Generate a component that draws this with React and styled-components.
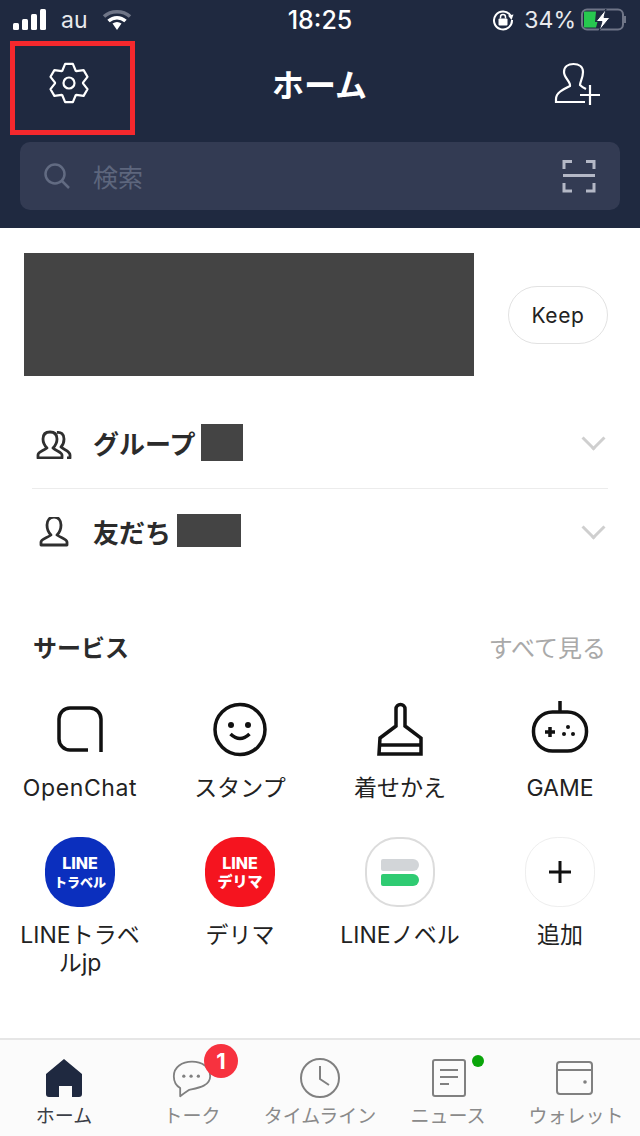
import React from 'react'
import styled, { createGlobalStyle } from 'styled-components'

const GlobalStyle = createGlobalStyle`
  html, body {
    margin: 0;
    padding: 0;
    background: #fff;
  }
  * {
    box-sizing: border-box;
  }
`

// six tooth gear outline around 0,0
const gearPath = () => {
  const pts = []
  for (let i = 0; i < 6; i++) {
    const a = ((-90 + i * 60) * Math.PI) / 180
    const steps = [
      [-0.5, 14],
      [-0.2, 19.5],
      [0.2, 19.5],
      [0.5, 14],
    ]
    steps.forEach(([d, r]) => {
      pts.push(`${(Math.cos(a + d) * r).toFixed(2)} ${(Math.sin(a + d) * r).toFixed(2)}`)
    })
  }
  return `M${pts.join('L')}Z`
}

export default function App() {
  return (
    <>
      <GlobalStyle />
      <Page>
        <Header>
          <StatusBar>
            <StatusLeft>
              <svg width="34" height="22" viewBox="0 0 34 22" fill="#fff">
                <rect x="0" y="14" width="6" height="7" rx="1.500" />
                <rect x="9" y="10" width="6" height="11" rx="1.500" />
                <rect x="18" y="5" width="6" height="16" rx="1.500" />
                <rect x="27" y="0" width="6" height="21" rx="1.500" />
              </svg>
              <Carrier>au</Carrier>
              <svg width="30" height="22" viewBox="0 0 30 22" fill="none" strokeWidth="3.500">
                <path d="M2 7.500C9 1 21 1 28 7.500" stroke="#6f7587" />
                <path d="M6.500 12C11.500 7.500 18.500 7.500 23.500 12" stroke="#fff" />
                <path d="M10.500 14.500L15 21L19.500 14.500Q15 11.500 10.500 14.500Z" fill="#fff" strokeWidth="0" />
              </svg>
            </StatusLeft>
            <Clock>18:25</Clock>
            <StatusRight>
              <svg width="22" height="22" viewBox="0 0 22 22" fill="none">
                <path d="M18.500 6.500A9 9 0 1 0 20 11" stroke="#fff" strokeWidth="2" />
                <path d="M16 6.500L21.500 5.500L19.500 11Z" fill="#fff" />
                <rect x="6.500" y="9.500" width="9" height="7" rx="1" fill="#fff" />
                <path d="M8.500 9.500V8a2.500 2.500 0 0 1 5 0V9.500" stroke="#fff" strokeWidth="1.500" />
              </svg>
              <Percent>34%</Percent>
              <svg width="46" height="24" viewBox="0 0 46 24" fill="none">
                <rect x="1" y="1.500" width="41" height="20" rx="5" stroke="#6f7587" strokeWidth="2" />
                <path d="M3 3.500H15L14 14H16.500L15 19.500H3Z" fill="#27c84f" />
                <path d="M44 8V15" stroke="#6f7587" strokeWidth="2" />
                <path d="M25 1L15 13.500H21L18 23L29 9.500H23Z" fill="#fff" stroke="#1f2940" strokeWidth="1" />
              </svg>
            </StatusRight>
          </StatusBar>

          <NavBar>
            <svg width="48" height="48" viewBox="-24 -24 48 48" fill="none" stroke="#fff" strokeWidth="2.200" strokeLinejoin="round">
              <path d={gearPath()} />
              <circle r="5.500" />
            </svg>
            <Title>ホーム</Title>
            <svg width="50" height="46" viewBox="552 60 50 46" fill="none" stroke="#fff" strokeWidth="2.200">
              <path d="M585 102H556V99C556 93 562 90 570 86C571 82 564 78 564 72C564 67 568 64 573.500 64C579 64 583 67 583 72C583 78 580 82 580 85Q582 87 586 89" />
              <path d="M590 85V105M580 95H600" />
            </svg>
          </NavBar>

          <SearchBar>
            <svg width="26" height="28" viewBox="0 0 26 28" fill="none" stroke="#626b82" strokeWidth="2.500">
              <circle cx="11" cy="12" r="9.500" />
              <path d="M18 19L25 26" />
            </svg>
            <SearchText>検索</SearchText>
            <svg width="34" height="34" viewBox="0 0 34 34" fill="none" stroke="#b4b8c6" strokeWidth="3">
              <path d="M2 10V2.500H10M24 2.500H32V10M2 24V32H10M24 32H32V24" />
              <path d="M1 16.500H33" />
            </svg>
          </SearchBar>

          <Highlight />
        </Header>

        <Content>
          <ProfileRow>
            <Redacted $w={450} $h={123} />
            <KeepButton>Keep</KeepButton>
          </ProfileRow>

          <Rows>
            <Row>
              <RowIcon>
                <svg width="36" height="30" viewBox="0 -1 36 30" fill="none" stroke="#2f2f2f" strokeWidth="2.800" strokeLinejoin="round">
                  <path d="M2 28V25C2 22 7 21 11 18C8 15 7 12 7 9C7 4 10 2 14 2C18 2 21 4 21 9C21 12 20 15 17 18C20 21 26 22 26 25V28Z" />
                  <path d="M21 2.500C25 2 28 4 28 9C28 12 27 15 25 17C28 20 34 21 34 25V28H31" />
                </svg>
              </RowIcon>
              <RowLabel>グループ</RowLabel>
              <Redacted $w={42} $h={37} $nudge={-4} />
              <Chevron />
            </Row>
            <Row>
              <RowIcon>
                <svg width="30" height="32" viewBox="0 2 30 32" fill="none" stroke="#2f2f2f" strokeWidth="2.800" strokeLinejoin="round">
                  <path d="M2 30V27C2 24 8 23 12 20C9 17 8 13 8 10C8 5 11 2 15 2C19 2 22 5 22 10C22 13 21 17 18 20C22 23 28 24 28 27V30Z" />
                </svg>
              </RowIcon>
              <RowLabel>友だち</RowLabel>
              <Redacted $w={64} $h={33} $nudge={-6} />
              <Chevron />
            </Row>
          </Rows>

          <ServiceHead>
            <ServiceTitle>サービス</ServiceTitle>
            <SeeAll>すべて見る</SeeAll>
          </ServiceHead>

          <ServiceGrid>
            {services.map((s) => (
              <ServiceItem key={s.label}>
                {s.icon}
                <ServiceLabel $tracking={s.tracking}>{s.label}</ServiceLabel>
              </ServiceItem>
            ))}
          </ServiceGrid>
        </Content>

        <TabBar>
          <Tab>
            <svg width="40" height="40" viewBox="0 0 40 40">
              <path d="M20 1L38 16V36a3 3 0 0 1-3 3H28V28H16V39H5a3 3 0 0 1-3-3V16Z" fill="#1f2940" />
              <path d="M15 28H24V39H15Z" fill="#fbfbfb" />
            </svg>
            <TabLabel $active>ホーム</TabLabel>
          </Tab>
          <Tab>
            <svg width="40" height="40" viewBox="0 0 44 42" fill="none" stroke="#808080" strokeWidth="2" strokeLinejoin="round">
              <path d="M22 3C33 3 42 9 42 19C42 30 28 32 19 34Q13 38 9 41Q9 35 9 32C4 29 2 24 2 19C2 9 11 3 22 3Z" />
              <circle cx="13" cy="19" r="1.800" fill="#808080" stroke="none" />
              <circle cx="21" cy="19" r="1.800" fill="#808080" stroke="none" />
              <circle cx="29" cy="19" r="1.800" fill="#808080" stroke="none" />
            </svg>
            <TabLabel>トーク</TabLabel>
            <Badge>1</Badge>
          </Tab>
          <Tab>
            <svg width="40" height="40" viewBox="0 0 40 40" fill="none" stroke="#808080" strokeWidth="2">
              <circle cx="20" cy="20" r="19" />
              <path d="M20 8V21L29 27" />
            </svg>
            <TabLabel>タイムライン</TabLabel>
          </Tab>
          <Tab>
            <svg width="40" height="40" viewBox="0 0 40 40" fill="none" stroke="#808080" strokeWidth="2">
              <rect x="5" y="2" width="32" height="36" rx="2" />
              <path d="M12 12H30M12 19H30M12 26H21" />
            </svg>
            <TabLabel>ニュース</TabLabel>
            <GreenDot />
          </Tab>
          <Tab>
            <svg width="40" height="40" viewBox="0 0 40 40" fill="none" stroke="#808080" strokeWidth="2">
              <rect x="1" y="4" width="35" height="32" rx="3" />
              <path d="M1 12H36" />
              <circle cx="29" cy="24" r="1.800" fill="#808080" stroke="none" />
            </svg>
            <TabLabel>ウォレット</TabLabel>
          </Tab>
        </TabBar>
      </Page>
    </>
  )
}

const Page = styled.div`
  display: flex;
  flex-direction: column;

  width: 640px;
  height: 1136px;
  overflow: hidden;

  font-family: Inter, 'Noto Sans CJK JP', sans-serif;
  color: #222;
`

const Header = styled.header`
  position: relative;

  display: flex;
  flex-direction: column;

  height: 228px;
  padding-bottom: 18px;

  background-color: #1f2940;
`

const StatusBar = styled.div`
  display: grid;
  grid-template-columns: 1fr auto 1fr;
  align-items: center;

  height: 40px;
  padding: 0 13px;

  color: #fff;
`

const StatusLeft = styled.div`
  display: flex;
  align-items: center;
  gap: 14px;
`

const StatusRight = styled.div`
  display: flex;
  align-items: center;
  justify-content: flex-end;
  gap: 5px;
`

const Carrier = styled.span`
  font-size: 23px;
  color: #e8e9ed;
`

const Clock = styled.span`
  font-size: 25px;
  font-weight: 500;
`

const Percent = styled.span`
  margin-left: 5px;

  font-size: 23px;
  color: #e8e9ed;
`

const NavBar = styled.div`
  display: flex;
  align-items: center;
  justify-content: space-between;

  height: 102px;
  padding: 0 38px 16px 45px;
`

const Title = styled.h1`
  margin: 0 0 0 -6px;

  font-size: 32px;
  font-weight: 700;
  color: #fff;
`

const SearchBar = styled.div`
  display: flex;
  align-items: center;
  gap: 23px;

  height: 68px;
  margin: 0 20px;
  padding: 0 24px;

  background-color: #333b53;
  border-radius: 10px;
`

const SearchText = styled.span`
  flex-grow: 1;

  font-size: 25px;
  color: #5d667d;
`

const Highlight = styled.div`
  position: absolute;
  top: 41px;
  left: 10px;

  width: 125px;
  height: 94px;

  border: 5px solid #f5282d;
`

const Content = styled.main`
  flex-grow: 1;

  padding-top: 25px;
`

const ProfileRow = styled.div`
  display: flex;
  align-items: center;
  justify-content: space-between;

  padding: 0 32px 0 24px;
`

const Redacted = styled.div`
  flex-shrink: 0;

  width: ${(p) => p.$w}px;
  height: ${(p) => p.$h}px;
  margin-top: ${(p) => p.$nudge || 0}px;

  background-color: #444;
`

const KeepButton = styled.button`
  width: 100px;
  height: 58px;
  padding-top: 2px;

  font-family: inherit;
  font-size: 21px;
  letter-spacing: 0.6px;
  color: #222;

  background-color: #fff;
  border: 1px solid #e2e2e2;
  border-radius: 29px;
`

const Rows = styled.div`
  margin: 24px 32px 0;
`

const Row = styled.div`
  display: flex;
  align-items: center;

  height: 88px;

  & + & {
    height: 89px;
    border-top: 1px solid #ececec;
  }
`

const RowIcon = styled.div`
  display: flex;
  justify-content: center;

  width: 44px;
  margin-right: 17px;
`

const RowLabel = styled.span`
  margin: -3px 6px 0 0;

  font-size: 26px;
  font-weight: 700;
  color: #2b2b2b;
`

const Chevron = styled.span`
  width: 17px;
  height: 17px;
  margin: -11px 6px 0 auto;

  border-right: 3px solid #cfcfcf;
  border-bottom: 3px solid #cfcfcf;
  transform: rotate(45deg);
`

const ServiceHead = styled.div`
  display: flex;
  align-items: center;
  justify-content: space-between;

  height: 40px;
  margin-top: 49px;
  padding: 0 34px 0 33px;
`

const ServiceTitle = styled.h2`
  margin: 0;

  font-size: 24px;
  font-weight: 700;
  color: #2b2b2b;
`

const SeeAll = styled.span`
  font-size: 24px;
  color: #a9a9a9;
`

const ServiceGrid = styled.div`
  display: grid;
  grid-template-columns: repeat(4, 160px);
  row-gap: 35px;

  margin-top: 32px;
`

const ServiceItem = styled.div`
  display: flex;
  flex-direction: column;
  align-items: center;
  gap: 14px;

  padding: 0 19px;
`

const ServiceLabel = styled.span`
  width: 100%;
  margin: 0 -10px;

  font-size: 23px;
  line-height: 28px;
  letter-spacing: ${(p) => p.$tracking || 0}px;
  text-align: center;
  word-break: break-all;
  color: #222;
`

const LineIcon = styled.svg`
  fill: none;
  stroke: #111;
  stroke-width: ${(p) => p.$weight};
`

const Logo = styled.div`
  display: flex;
  flex-direction: column;
  align-items: center;
  justify-content: center;
  gap: 3px;

  width: 70px;
  height: 70px;

  color: #fff;
  background-color: ${(p) => p.$bg};
  border: ${(p) => p.$border || 'none'};
  border-radius: 46%;
`

const LogoTop = styled.span`
  font-size: 16px;
  font-weight: 800;
  line-height: 16px;
`

const LogoSub = styled.span`
  font-size: ${(p) => p.$size}px;
  font-weight: 900;
  line-height: 16px;
  white-space: nowrap;
`

const NovelBar = styled.div`
  width: 38px;
  height: 12px;

  background-color: ${(p) => p.$color};
  border-radius: 2px 6px 6px 2px;
`

const TabBar = styled.nav`
  display: grid;
  grid-template-columns: repeat(5, 128px);

  height: 98px;

  background-color: #fbfbfb;
  border-top: 2px solid #e6e6e6;
`

const Tab = styled.div`
  position: relative;

  display: flex;
  flex-direction: column;
  align-items: center;
  gap: 6px;

  padding-top: 18px;
`

const TabLabel = styled.span`
  font-size: 19px;
  line-height: 26px;
  white-space: nowrap;
  color: ${(p) => (p.$active ? '#3c3f47' : '#8a8a8a')};
`

const Badge = styled.span`
  position: absolute;
  top: 4px;
  left: 76px;

  display: flex;
  align-items: center;
  justify-content: center;

  width: 34px;
  height: 34px;

  font-size: 22px;
  font-weight: 700;
  color: #fff;

  background-color: #f7323f;
  border-radius: 50%;
`

const GreenDot = styled.span`
  position: absolute;
  top: 15px;
  left: 88px;

  width: 12px;
  height: 12px;

  background-color: #0aa50a;
  border-radius: 50%;
`

const services = [
  {
    label: 'OpenChat',
    tracking: 0.6,
    icon: (
      <LineIcon width="60" height="62" viewBox="50 698 60 62" $weight={3.5}>
        <path d="M88 750H70a11 11 0 0 1-11-11V719a11 11 0 0 1 11-11H90a11 11 0 0 1 11 11V752" />
      </LineIcon>
    ),
  },
  {
    label: 'スタンプ',
    icon: (
      <LineIcon width="60" height="62" viewBox="210 698 60 62" $weight={3.5}>
        <circle cx="240" cy="729.5" r="25" />
        <path d="M230.5 734q9.500 9 19 0" />
        <circle cx="231" cy="725" r="3" fill="#111" stroke="none" />
        <circle cx="248" cy="725" r="3" fill="#111" stroke="none" />
      </LineIcon>
    ),
  },
  {
    label: '着せかえ',
    icon: (
      <LineIcon width="60" height="62" viewBox="370 698 60 62" $weight={3.5}>
        <path d="M396 726V709a4.500 4.500 0 0 1 9 0V726L421 738V754H379L380 738Z" />
        <path d="M380 745H421" />
      </LineIcon>
    ),
  },
  {
    label: 'GAME',
    icon: (
      <LineIcon width="60" height="62" viewBox="530 698 60 62" $weight={3.5}>
        <path d="M560 701V711" />
        <rect x="533.500" y="712" width="53" height="39" rx="19" />
        <path d="M545 732H555M550 727V737" />
        <circle cx="568" cy="727" r="2" fill="#111" stroke="none" />
        <circle cx="564" cy="734" r="2" fill="#111" stroke="none" />
        <circle cx="573" cy="734" r="2" fill="#111" stroke="none" />
      </LineIcon>
    ),
  },
  {
    label: 'LINEトラベルjp',
    icon: (
      <Logo $bg="#0b2fbe">
        <LogoTop>LINE</LogoTop>
        <LogoSub $size={13}>トラベル</LogoSub>
      </Logo>
    ),
  },
  {
    label: 'デリマ',
    icon: (
      <Logo $bg="#f5141f">
        <LogoTop>LINE</LogoTop>
        <LogoSub $size={15}>デリマ</LogoSub>
      </Logo>
    ),
  },
  {
    label: 'LINEノベル',
    icon: (
      <Logo $bg="#fff" $border="2px solid #dcdcdc">
        <NovelBar $color="#d2d5d8" />
        <NovelBar $color="#2fcb72" />
      </Logo>
    ),
  },
  {
    label: '追加',
    icon: (
      <Logo $bg="#fff" $border="1px solid #eeeeee">
        <LineIcon width="26" height="26" viewBox="0 0 26 26" $weight={3}>
          <path d="M13 2V24M2 13H24" />
        </LineIcon>
      </Logo>
    ),
  },
]
